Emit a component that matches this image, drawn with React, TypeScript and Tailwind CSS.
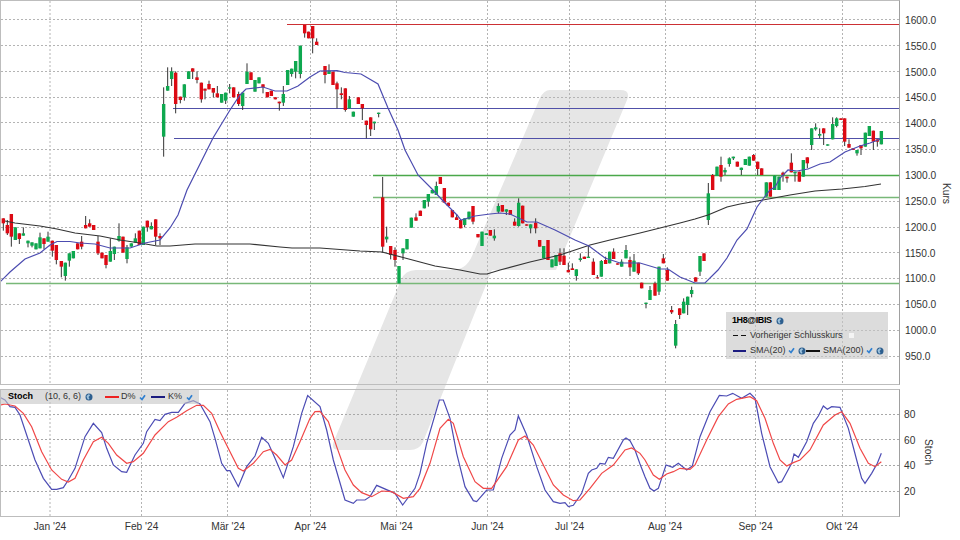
type Candle = [number, number, number, string, number?, number?];
type Pt = [number, number];

/* Everything below was read off the 3x crops, so each block keeps its crop
   origin and gets mapped back to page pixels. */
const candleBlocks: { ox: number; oy: number; rows: Candle[] }[] = [
  {
    ox: 0,
    oy: 190,
    rows: [
      [10, 85, 100, "r", 85, 122], [22, 105, 130, "r", 90, 135], [34, 72, 140, "r", 72, 170], [46, 112, 150, "g"],
      [58, 130, 147, "r", 130, 162], [70, 130, 137, "g", 112, 137], [84, 152, 160, "g", 152, 172], [96, 157, 167, "g", 157, 172],
      [108, 160, 178, "g"], [120, 142, 175, "g", 128, 175], [132, 145, 162, "r", 145, 178], [144, 140, 155, "g", 125, 155],
      [157, 152, 182, "r", 152, 200], [169, 165, 210, "r", 165, 223], [184, 213, 230, "r", 213, 262], [196, 218, 258, "g", 218, 272],
      [208, 190, 212, "g", 190, 230], [220, 183, 205, "g"], [233, 160, 178, "r"], [245, 155, 170, "r", 138, 178],
      [257, 105, 115, "r", 78, 115], [269, 100, 110, "r", 88, 110], [281, 105, 120, "r"], [294, 155, 190, "r", 138, 195],
      [306, 188, 205, "r"], [318, 195, 225, "r", 195, 235], [331, 183, 215, "g", 145, 215], [343, 170, 192, "g", 170, 210],
      [357, 138, 152, "g", 100, 155], [369, 140, 188, "r"], [381, 172, 207, "g", 165, 220], [394, 160, 170, "g"],
      [406, 145, 158, "g", 130, 158], [418, 122, 165, "r"], [430, 110, 165, "g"], [442, 92, 112, "r", 92, 125],
      [454, 108, 118, "g", 97, 118], [467, 88, 140, "r", 88, 165], [480, 138, 145, "r", 130, 165],
    ],
  },
  {
    ox: 0,
    oy: 0,
    rows: [
      [491, 312, 410, "g", 262, 470], [503, 258, 272, "g", 202, 272], [515, 214, 237, "g", 202, 258], [527, 218, 312, "r", 214, 340],
      [541, 290, 300, "r", 290, 310], [553, 253, 292, "g", 253, 302], [566, 214, 237, "g"], [578, 205, 215, "r", 205, 237],
      [591, 232, 240, "r", 214, 250], [604, 248, 298, "r", 248, 308], [615, 266, 272, "r", 266, 298], [627, 252, 268, "r", 242, 268],
      [640, 264, 278, "r", 264, 292], [652, 280, 292, "r", 258, 292], [665, 282, 308, "g"], [677, 278, 302, "g", 278, 312],
      [689, 262, 266, "g", 252, 280], [701, 262, 292, "r"], [716, 282, 312, "r", 275, 318], [728, 278, 318, "g", 278, 330],
      [741, 215, 252, "g", 190, 252], [753, 217, 240, "r"], [765, 240, 275, "g"], [777, 232, 250, "g"],
      [789, 253, 262, "r", 253, 280], [802, 276, 292, "r"], [814, 272, 288, "r"], [826, 292, 298, "r"],
      [838, 305, 310, "r", 305, 332], [850, 282, 308, "g", 258, 318], [863, 210, 255, "g"], [875, 206, 222, "g", 206, 230],
      [887, 183, 215, "g", 183, 235], [901, 137, 222, "g", 137, 235], [914, 75, 100, "r", 75, 113], [926, 95, 115, "r"],
      [938, 78, 115, "r", 78, 160], [950, 125, 135, "r", 115, 135],
    ],
  },
  {
    ox: 320,
    oy: 0,
    rows: [
      [15, 198, 225, "r", 198, 250], [27, 212, 222, "g", 193, 222], [39, 215, 255, "r"], [51, 250, 268, "r", 245, 325],
      [64, 280, 285, "r", 262, 298], [76, 265, 330, "r", 265, 335], [88, 298, 325, "g", 288, 325], [100, 335, 350, "g"],
      [115, 292, 312, "r"], [127, 312, 325, "r", 312, 360], [139, 362, 375, "r", 362, 415], [152, 352, 388, "r", 352, 408],
      [163, 365, 370, "g", 365, 390], [176, 338, 342, "g", 338, 352],
    ],
  },
  {
    ox: 320,
    oy: 190,
    rows: [
      [188, 22, 170, "r", -39, 188], [200, 140, 148, "g", 110, 158], [212, 168, 195, "r", 168, 208], [225, 180, 210, "r", 172, 230],
      [237, 228, 280, "g"], [249, 175, 190, "g", 175, 210], [261, 147, 178, "g"], [274, 83, 113, "g"],
      [288, 82, 92, "r", 70, 92], [301, 62, 78, "r"], [313, 30, 55, "g"], [325, 12, 35, "g", 12, 50],
      [337, 0, 10, "g"], [349, -12, 15, "g", -25, 15], [361, -39, -18, "r"], [373, -6, 38, "r"],
      [385, 38, 48, "r"], [397, 60, 82, "r"], [410, 82, 90, "r", 72, 90], [422, 90, 115, "r"],
      [434, 85, 105, "g", 85, 112], [447, 65, 88, "g"], [459, 48, 95, "r", 48, 103], [474, 132, 142, "r"],
      [486, 125, 168, "g"], [499, 130, 135, "g"], [511, 120, 137, "r"], [523, 137, 145, "g", 118, 152],
      [535, 48, 65, "g", 40, 70], [547, 45, 65, "r"], [559, 58, 65, "g", 58, 75], [571, 60, 75, "r"],
      [584, 95, 107, "r", 85, 107], [596, 38, 108, "g", 25, 110], [608, 47, 100, "r"], [620, 103, 107, "r"],
      [632, 103, 115, "g", 103, 130], [647, 98, 115, "r", 85, 130], [659, 150, 170, "r"], [671, 168, 205, "g"],
      [684, 150, 210, "r"], [696, 208, 232, "g"], [708, 195, 228, "g"], [720, 190, 215, "r", 175, 225],
      [732, 197, 225, "r", 175, 225], [745, 240, 247, "r", 218, 247], [757, 235, 240, "r", 220, 240], [769, 238, 258, "g", 238, 272],
      [781, 205, 210, "g", 190, 215], [793, 200, 207, "r"], [805, 200, 204, "g", 168, 204], [820, 215, 255, "r", 205, 255],
      [832, 262, 264, "r", 255, 265], [844, 213, 260, "g", 210, 260], [857, 210, 222, "r", 200, 222], [869, 185, 220, "g"],
      [881, 185, 207, "r", 175, 207], [893, 220, 224, "r"], [905, 215, 230, "g", 208, 230], [918, 180, 205, "g", 165, 205],
      [930, 210, 232, "r", 200, 258], [942, 212, 245, "g", 192, 245], [955, 218, 250, "r", 218, 255],
    ],
  },
  {
    ox: 640,
    oy: 190,
    rows: [
      [5, 278, 295, "r"], [18, 338, 342, "g", 338, 355], [30, 300, 330, "g", 288, 330], [45, 280, 317, "r", 275, 317],
      [57, 230, 305, "g", 230, 315], [70, 205, 220, "r", 192, 220], [82, 240, 272, "r", 232, 272], [95, 360, 367, "r", 348, 372],
      [107, 402, 467, "g", 390, 475], [119, 355, 375, "r", 355, 387], [131, 335, 370, "g", 325, 370], [143, 320, 345, "g", 320, 375],
      [155, 300, 312, "g", 290, 322], [167, 262, 275, "r"], [180, 198, 245, "g", 198, 258], [192, 190, 213, "r"],
      [205, 10, 90, "g", -21, 105],
    ],
  },
  {
    ox: 640,
    oy: 0,
    rows: [
      [218, 525, 570, "r", 522, 570], [231, 500, 528, "g"], [243, 495, 530, "r", 470, 545], [255, 510, 517, "g", 503, 525],
      [268, 475, 492, "g", 472, 500], [280, 470, 475, "g", 470, 480], [292, 485, 500, "r"], [304, 503, 510, "g", 503, 525],
      [316, 477, 495, "g"], [328, 470, 497, "g"], [341, 465, 482, "r", 462, 482], [353, 485, 507, "r", 485, 525],
      [365, 505, 525, "r"], [379, 547, 590, "g"], [391, 547, 590, "r"], [404, 527, 570, "g"],
      [417, 530, 570, "g"], [429, 518, 525, "r", 515, 545], [441, 530, 535, "r", 530, 548], [454, 488, 517, "r", 460, 517],
      [465, 515, 520, "g", 515, 545], [478, 515, 545, "r"], [490, 480, 530, "g"], [502, 472, 490, "r", 472, 505],
      [515, 385, 435, "g", 385, 450], [527, 382, 388, "g", 370, 392], [539, 402, 407, "g", 385, 415], [551, 385, 400, "r", 385, 435],
      [563, 433, 437, "g"], [578, 372, 418, "g", 352, 418], [590, 355, 378, "g", 352, 382], [603, 355, 360, "r"],
      [614, 355, 425, "r", 355, 438], [627, 432, 443, "r", 418, 443], [639, 445, 450, "r"], [651, 450, 460, "g", 450, 467],
      [663, 435, 445, "r", 435, 465], [676, 398, 440, "g"], [688, 378, 408, "g"], [700, 392, 425, "r", 392, 450],
      [712, 418, 425, "r", 418, 440], [724, 393, 433, "g"],
    ],
  },
];

const candles = candleBlocks.flatMap(({ ox, oy, rows }) =>
  rows.map(([x, bt, bb, c, wt, wb]) => ({
    x: ox + x / 3,
    bodyTop: oy + bt / 3,
    bodyH: Math.max((bb - bt) / 3, 1),
    wickTop: oy + (wt ?? bt) / 3,
    wickBottom: oy + (wb ?? bb) / 3,
    up: c === "g",
  }))
);

const sma20: Pt[] = [
  [0, 282], [10, 272], [25, 259], [40, 253], [50, 245], [57, 241.5], [70, 241.5], [80, 243], [95, 244], [110, 248],
  [130, 248], [145, 243], [160, 240], [170, 228], [178, 215], [187, 190], [213, 138], [230, 110], [240, 95], [246, 89],
  [263, 87], [275, 91], [287, 91], [298, 86], [310, 77], [320, 71], [337, 70.7], [345, 72.5], [361, 74], [378, 84],
  [388, 108], [398, 130], [405, 150], [418, 175], [432, 189], [445, 203], [457, 215], [461, 220], [475, 216], [490, 214],
  [500, 213], [510, 214], [527, 222], [537, 222], [555, 230], [575, 240], [589, 246], [605, 258], [620, 263], [640, 263],
  [660, 269], [668, 269], [680, 277], [695, 283], [705, 283], [718, 270], [727, 258], [737, 240], [747, 229], [757, 207],
  [763, 199], [770, 190], [775, 187], [780, 178], [788, 170], [797, 171], [808, 169], [820, 164], [830, 162], [845, 152],
  [860, 146], [870, 143], [881, 139],
];

const sma200: Pt[] = [
  [5, 221], [15, 223], [40, 226], [57, 229], [75, 233], [100, 236], [120, 240], [140, 243], [157, 246], [170, 246],
  [195, 244], [250, 244], [280, 247], [292, 248], [320, 248], [360, 251], [382, 252], [405, 258], [435, 266], [460, 270],
  [480, 274], [487, 274], [500, 270], [530, 262], [560, 255], [590, 245], [610, 240], [640, 233], [680, 223], [695, 219],
  [708, 215], [727, 207], [740, 204], [763, 200], [790, 195], [815, 191], [842, 189], [865, 186.5], [881, 184],
];

// stochastic, in crop coordinates per crop
const fromCrop = (ox: number, pts: Pt[]) => pts.map(([x, y]): Pt => [ox + x / 3, 380 + y / 3]);

const stochK: Pt[] = [
  ...fromCrop(0, [
    [0, 52], [15, 60], [30, 80], [45, 82], [60, 105], [75, 150], [90, 195], [105, 240], [130, 295], [155, 328], [170, 328],
    [190, 323], [205, 300], [225, 265], [255, 170], [280, 130], [305, 158], [320, 205], [340, 255], [365, 275], [380, 277],
    [405, 225], [430, 190], [440, 155], [465, 118], [480, 122], [495, 103], [515, 97], [535, 97], [555, 70], [580, 62],
    [600, 72], [630, 125], [645, 175], [665, 250], [680, 272], [690, 272], [715, 320], [740, 260], [765, 228], [785, 172],
    [805, 190], [825, 235], [850, 293], [880, 200], [905, 100], [923, 47],
  ]),
  ...fromCrop(320, [
    [0, 80], [20, 150], [40, 240], [75, 360], [100, 370], [110, 360], [135, 360], [150, 350], [170, 316], [225, 340],
    [248, 375], [285, 325], [300, 280], [320, 190], [358, 60], [370, 60], [390, 115], [410, 220], [435, 320], [460, 362],
    [470, 365], [500, 330], [520, 330], [545, 235], [570, 165], [585, 150], [595, 108], [620, 165], [650, 260], [675, 330],
    [700, 365], [720, 370], [735, 368], [745, 380], [760, 376], [785, 340], [805, 280], [815, 270], [830, 265], [840, 250],
    [855, 252], [865, 232], [880, 235], [910, 180], [918, 174], [930, 182], [945, 210],
  ]),
  ...fromCrop(640, [
    [0, 252], [15, 290], [30, 325], [42, 333], [55, 325], [78, 255], [98, 262], [115, 250], [140, 270], [157, 258],
    [180, 170], [210, 95], [238, 46], [260, 48], [278, 40], [305, 55], [330, 40], [345, 55], [365, 160], [390, 260],
    [415, 308], [425, 305], [455, 250], [462, 222], [475, 232], [500, 185], [520, 130], [535, 108], [550, 78], [562, 88],
    [575, 80], [600, 82], [625, 145], [650, 240], [665, 295], [675, 310], [695, 280], [712, 250], [724, 220],
  ]),
];

const stochD: Pt[] = [
  ...fromCrop(0, [
    [0, 75], [15, 72], [45, 78], [70, 100], [95, 140], [125, 215], [155, 270], [185, 298], [205, 306], [225, 295], [250, 240],
    [280, 185], [305, 172], [325, 190], [350, 225], [380, 250], [400, 245], [430, 220], [465, 165], [505, 125], [530, 112],
    [560, 92], [590, 76], [610, 76], [635, 100], [660, 155], [690, 215], [715, 265], [730, 273], [760, 250], [790, 215],
    [810, 208], [830, 225], [855, 255], [875, 240], [900, 185], [930, 115], [945, 95],
  ]),
  ...fromCrop(320, [
    [0, 94], [25, 125], [50, 200], [75, 270], [100, 315], [125, 338], [155, 350], [185, 333], [215, 335], [250, 355],
    [280, 350], [300, 325], [330, 250], [360, 145], [385, 118], [400, 130], [430, 230], [465, 305], [490, 325], [515, 325],
    [560, 260], [595, 180], [615, 168], [640, 195], [670, 255], [700, 315], [730, 345], [760, 362], [780, 360], [810, 325],
    [845, 280], [880, 255], [915, 210], [935, 204],
  ]),
  ...fromCrop(640, [
    [0, 220], [15, 240], [40, 285], [58, 298], [80, 282], [100, 275], [120, 265], [150, 268], [165, 255], [200, 180],
    [235, 110], [265, 72], [290, 58], [330, 50], [350, 62], [375, 115], [400, 190], [420, 240], [440, 258], [460, 248],
    [480, 240], [510, 210], [550, 135], [585, 105], [605, 95], [630, 130], [660, 205], [685, 250], [705, 260], [724, 245],
  ]),
];

const monthX = [50, 141.5, 227.5, 310.5, 396.5, 487.5, 569.5, 665.5, 755.5, 842.5];
const priceY = [19.5, 45.5, 71.5, 97.5, 122.5, 149.5, 175.5, 201.5, 227.5, 252.5, 278.5, 304.5, 330.5, 356.5];
const stochY = [414.5, 439.5, 465.5, 491.5];

const line = (pts: Pt[]) => pts.map(([x, y]) => `${x},${y}`).join(" ");

function Globe() {
  return (
    <svg width="8" height="8" viewBox="0 0 8 8" className="shrink-0" aria-hidden="true">
      <circle cx="4" cy="4" r="3.5" fill="#2d5f8f" />
      <path d="M1.5 3 L4 1 L5 2.5 L3.5 4 L4.5 6 L3 6.8 L2 5 Z" fill="#9fc3dd" />
    </svg>
  );
}

function Check() {
  return (
    <svg width="7" height="7" viewBox="0 0 7 7" className="shrink-0" aria-hidden="true">
      <path d="M1 3.5 L3 5.5 L6 1.2" fill="none" stroke="#2f7fd0" strokeWidth="1.7" />
    </svg>
  );
}

function Watermark() {
  return (
    <svg className="absolute left-0 top-0" width="960" height="540" aria-hidden="true">
      <path
        d="M550 90 H620 Q631 90 627 100 L556 270 H492 L423 442 Q419 450 410 450 H340 Q330 450 334 441 L401 280 Q405 270 416 270 H452 Q466 270 472 256 L540 98 Q544 90 550 90 Z"
        fill="#e6e6e6"
      />
    </svg>
  );
}

function PriceChart() {
  return (
    <svg viewBox="1 1 898 383" className="absolute inset-0 h-full w-full" aria-hidden="true">
      {priceY.map((y) => (
        <line key={y} x1="1" x2="899" y1={y} y2={y} stroke="#b4b4b4" strokeDasharray="2 2" />
      ))}
      {monthX.map((x) => (
        <line key={x} x1={x} x2={x} y1="1" y2="384" stroke="#b4b4b4" strokeDasharray="2 2" />
      ))}
      <line x1="287" x2="899" y1="24.5" y2="24.5" stroke="#cc3034" strokeWidth="1.2" />
      <line x1="173" x2="899" y1="108.5" y2="108.5" stroke="#5050a8" strokeWidth="1.2" />
      <line x1="174" x2="899" y1="138.5" y2="138.5" stroke="#5050a8" strokeWidth="1.2" />
      <line x1="373" x2="899" y1="175.5" y2="175.5" stroke="#4aa84a" strokeWidth="1.5" />
      <line x1="373" x2="899" y1="197.5" y2="197.5" stroke="#78b878" strokeWidth="1.6" />
      <line x1="6" x2="899" y1="283.5" y2="283.5" stroke="#78b878" strokeWidth="1.6" />
      {candles.map((c) => (
        <g key={`${c.x}-${c.bodyTop}`}>
          <line x1={c.x} x2={c.x} y1={c.wickTop} y2={c.wickBottom} stroke="#333" />
          <rect
            x={c.x - 1.7}
            y={c.bodyTop}
            width="3.4"
            height={c.bodyH}
            fill={c.up ? "#0ea84f" : "#dc0a14"}
          />
        </g>
      ))}
      <polyline points={line(sma200)} fill="none" stroke="#333" strokeWidth="1.2" />
      <polyline points={line(sma20)} fill="none" stroke="#4c4cb0" strokeWidth="1.2" />
    </svg>
  );
}

function StochChart() {
  return (
    <svg viewBox="1 390 898 126" className="absolute inset-0 h-full w-full" aria-hidden="true">
      {stochY.map((y) => (
        <line key={y} x1="1" x2="899" y1={y} y2={y} stroke="#a8a8a8" strokeDasharray="2 2" />
      ))}
      {monthX.map((x) => (
        <line key={x} x1={x} x2={x} y1="390" y2="516" stroke="#b4b4b4" strokeDasharray="2 2" />
      ))}
      <polyline points={line(stochK)} fill="none" stroke="#4c4cb4" strokeWidth="1.2" />
      <polyline points={line(stochD)} fill="none" stroke="#f04848" strokeWidth="1.2" />
    </svg>
  );
}

function PriceLegend() {
  return (
    <div className="absolute left-[725px] top-[311px] flex h-[47px] w-[162px] flex-col bg-[#c4c4c4]/60 pl-[7px] pt-[1px] text-[9px] text-[#333]">
      <div className="-ml-[1px] flex h-[15px] items-center gap-[4px]">
        <span className="font-bold tracking-[-0.4px] text-black">1H8@IBIS</span>
        <Globe />
      </div>
      <div className="flex h-[15px] items-center">
        <span className="h-[1px] w-[5px] bg-[#111]" />
        <span className="ml-[3px] h-[1px] w-[5px] bg-[#111]" />
        <span className="ml-[4px]">Vorheriger Schlusskurs</span>
        <span className="ml-[6px] h-[5px] w-[5px] bg-[#f4f4f4]" />
      </div>
      <div className="flex h-[15px] items-center">
        <span className="h-[2px] w-[13px] bg-[#1c1c80]" />
        <span className="ml-[4px] w-[38px]">SMA(20)</span>
        <Check />
        <span className="ml-[3px]"><Globe /></span>
        <span className="h-[2px] w-[14px] bg-[#111]" />
        <span className="ml-[3px] w-[43px]">SMA(200)</span>
        <Check />
        <span className="ml-[3px]"><Globe /></span>
      </div>
    </div>
  );
}

function StochLegend() {
  return (
    <div className="absolute left-[0px] top-0 flex h-[14px] w-[198px] items-center bg-[#c4c4c4]/60 pl-[7px] text-[9px] text-[#333]">
      <span className="w-[37px] font-bold text-black">Stoch</span>
      <span className="w-[40px]">(10, 6, 6)</span>
      <Globe />
      <span className="ml-[12px] h-[2px] w-[14px] bg-[#ee2222]" />
      <span className="ml-[2px] w-[18px]">D%</span>
      <Check />
      <span className="ml-[5px] h-[2px] w-[14px] bg-[#1c1c80]" />
      <span className="ml-[3px] w-[18px]">K%</span>
      <Check />
    </div>
  );
}

export default function App() {
  return (
    <div className="relative h-[540px] w-[960px] overflow-hidden bg-white font-['Liberation_Sans',Arial,sans-serif] text-[10.2px] text-[#333]">
      <Watermark />
      <div className="relative flex h-[385px]">
        <div className="relative w-[900px] border border-[#bdbdbd] border-r-[#a0a0a0]">
          <PriceChart />
          <PriceLegend />
        </div>
        <div className="relative flex flex-col pl-[5px] pt-[7.5px]">
          {["1600.0", "1550.0", "1500.0", "1450.0", "1400.0", "1350.0", "1300.0", "1250.0", "1200.0", "1150.0", "1100.0", "1050.0", "1000.0", "950.0"].map((p) => (
            <span key={p} className="flex h-[25.87px] items-center">{p}</span>
          ))}
          <span className="absolute left-[39px] top-[183px] [writing-mode:vertical-rl]">Kurs</span>
        </div>
      </div>
      <div className="relative mt-[4px] flex h-[128px]">
        <div className="relative w-[900px] border border-[#bdbdbd] border-r-[#a0a0a0]">
          <StochChart />
          <StochLegend />
        </div>
        <div className="relative flex flex-col pl-[4px] pt-[13px]">
          {["80", "60", "40", "20"].map((v) => (
            <span key={v} className="flex h-[25.6px] items-center">{v}</span>
          ))}
          <span className="absolute left-[21px] top-[50px] [writing-mode:vertical-rl]">Stoch</span>
        </div>
      </div>
      <div className="relative flex h-[20px] items-center text-center">
        <span className="w-[100px]">Jan '24</span>
        <span className="w-[83px]">Feb '24</span>
        <span className="w-[90px]">Mär '24</span>
        <span className="w-[75px]">Apr '24</span>
        <span className="w-[97px]">Mai '24</span>
        <span className="w-[85px]">Jun '24</span>
        <span className="w-[79px]">Jul '24</span>
        <span className="w-[112px]">Aug '24</span>
        <span className="w-[69px]">Sep '24</span>
        <span className="w-[104px]">Okt '24</span>
      </div>
    </div>
  );
}
